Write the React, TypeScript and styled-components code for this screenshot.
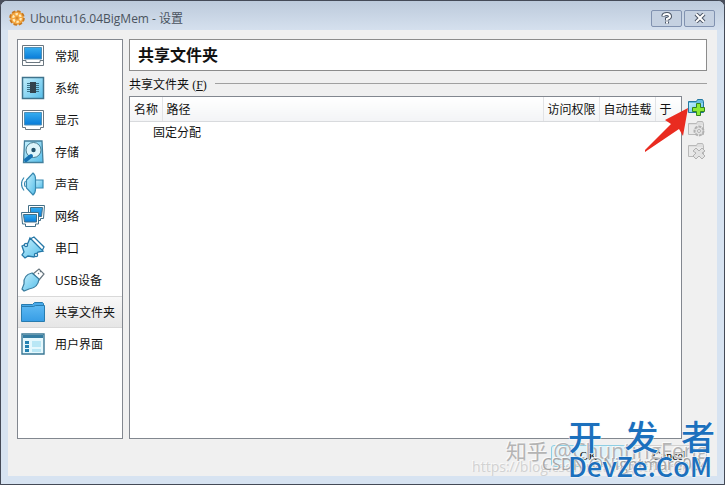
import React from "react";
import styled, { createGlobalStyle } from "styled-components";

const sans = `"Open Sans", "Noto Sans CJK SC", sans-serif`;

const GlobalStyle = createGlobalStyle`
  * { box-sizing: border-box; }
  body { margin: 0; background: #4a4f5c; font: 12px/18px ${sans}; color: #111; }
  button { font: inherit; color: inherit; padding: 0; }
`;

const Window = styled.div`
  height: 100vh;
  display: flex;
  flex-direction: column;
  position: relative;
  overflow: hidden;
  border: 1px solid #444a57;
  border-radius: 7px 7px 0 0;
  background: #d7e3f1;
  padding: 0 7px 8px;
`;

const TitleBar = styled.header`
  height: 29px;
  flex: none;
  display: flex;
  align-items: center;
  gap: 5px;
  margin: 0 -7px;
  padding: 5px 9px 0 8px;
  background: linear-gradient(#bccadb, #d5e0ee);
`;

const Title = styled.h1`
  margin: 0;
  padding-top: 2px;
  flex: 1;
  font-size: 12px;
  line-height: 18px;
  font-weight: 400;
  color: #4a535e;
`;

const CaptionButton = styled.button`
  width: 31px;
  height: 17px;
  display: grid;
  place-items: center;
  border: 1px solid #8192b0;
  border-radius: 2px;
  background: #c5d1e1;
`;

const CaptionButtons = styled.div`
  display: flex;
  gap: 2px;
`;

const Body = styled.main`
  flex: 1;
  min-height: 0;
  display: grid;
  grid-template: minmax(0, 1fr) / 106px minmax(0, 1fr);
  gap: 6px;
  padding: 9px 10px 37px 9px;
  background: #f0f0f0;
`;

const Nav = styled.nav`
  border: 1px solid #82878f;
  background: #fff;
`;

const NavItem = styled.button<{ $active?: boolean }>`
  width: 100%;
  height: 32px;
  display: flex;
  align-items: center;
  gap: 10px;
  padding: 0 3px;
  border: solid ${(p) => (p.$active ? "#d9d9d9" : "transparent")};
  border-width: 1px 0;
  background: ${(p) => (p.$active ? "linear-gradient(#f8f8f8, #e6e6e6)" : "none")};
  text-align: left;
  white-space: nowrap;
  svg { flex: none; }
`;

const NavLabel = styled.span`
  padding-top: 2px;
`;

const Panel = styled.section`
  display: flex;
  flex-direction: column;
  min-width: 0;
`;

const Heading = styled.h2`
  margin: 0;
  height: 32px;
  padding: 0 8px;
  border: 1px solid #8c8c8c;
  background: #fff;
  font-size: 16px;
  line-height: 30px;
  font-weight: 700;
`;

const Group = styled.div`
  display: flex;
  align-items: center;
  gap: 8px;
  height: 25px;
  &::after {
    content: "";
    flex: 1;
    height: 1px;
    background: #a0a0a0;
  }
`;

const GroupLabel = styled.span`
  padding-top: 2px;
`;

const Shortcut = styled.span`
  font-family: "Liberation Serif", serif;
`;

const Content = styled.div`
  flex: 1;
  min-height: 0;
  display: flex;
  gap: 5px;
`;

const TableBox = styled.div`
  flex: 1;
  border: 1px solid #82878f;
  background: #fff;
`;

const Table = styled.table`
  width: 100%;
  table-layout: fixed;
  border-collapse: collapse;
`;

const HeadCell = styled.th<{ $width?: number }>`
  width: ${(p) => (p.$width ? `${p.$width}px` : "auto")};
  height: 24px;
  padding: 2px 0 0 4px;
  border-right: 1px solid #e2e3e6;
  border-bottom: 1px solid #d8dadd;
  background: linear-gradient(#fff, #f3f4f6);
  font-weight: 400;
  text-align: left;
  white-space: nowrap;
  &:last-child { border-right: 0; }
`;

const Cell = styled.td`
  height: 20px;
  padding: 2px 0 0 23px;
`;

const Tools = styled.div`
  width: 20px;
  padding-top: 2px;
  display: flex;
  flex-direction: column;
  gap: 4px;
`;

const Tool = styled.button`
  width: 20px;
  height: 18px;
  border: 0;
  background: none;
  svg { display: block; }
`;

const Arrow = styled.svg`
  position: absolute;
  right: 35px;
  top: 105px;
`;

const DialogButtons = styled.div`
  position: absolute;
  right: 17px;
  bottom: 17px;
  display: flex;
  gap: 6px;
`;

const DialogButton = styled.button<{ $primary?: boolean }>`
  width: 75px;
  height: 22px;
  border: 1px solid ${(p) => (p.$primary ? "#8fcfe4" : "#d2d2d2")};
  border-radius: 3px;
  background: ${(p) => (p.$primary ? "#dff1f7" : "#eee")};
  font-family: "Liberation Serif", serif;
`;

const Mark = styled.span<{ $size: number; $right: number; $bottom: number; $color: string }>`
  position: absolute;
  right: ${(p) => p.$right}px;
  bottom: ${(p) => p.$bottom}px;
  color: ${(p) => p.$color};
  font-size: ${(p) => p.$size}px;
  line-height: 1;
  white-space: nowrap;
  text-shadow: -1px -1px #fafafa;
`;

const Brand = styled.div`
  position: absolute;
  right: 9px;
  bottom: 6px;
  width: 147px;
  color: #1c70bd;
  font-family: "Noto Sans CJK SC", sans-serif;
  font-weight: 500;
  -webkit-text-stroke: 1px #f6fafd;
  paint-order: stroke fill;
`;

const BrandTop = styled.div`
  display: flex;
  justify-content: space-between;
  font-size: 34px;
  line-height: 36px;
`;

const BrandBottom = styled.div`
  font-size: 27px;
  line-height: 24px;
  white-space: nowrap;
`;

const HiddenDefs = styled.svg`
  position: absolute;
`;

const Gradients = () => (
  <HiddenDefs width="0" height="0" aria-hidden="true">
    <defs>
      <linearGradient id="screen" x2="0" y2="1"><stop stopColor="#35adf0" /><stop offset="1" stopColor="#087bd8" /></linearGradient>
      <linearGradient id="pale" x2="1" y2="1"><stop stopColor="#c5f0fd" /><stop offset="1" stopColor="#55bde9" /></linearGradient>
      <linearGradient id="folder" x2="0" y2="1"><stop stopColor="#5cb8f2" /><stop offset="1" stopColor="#379de5" /></linearGradient>
    </defs>
  </HiddenDefs>
);

const icons: Record<string, React.ReactNode> = {
  general: <g stroke="#6b7780"><path fill="#fff" d="M1.5 1.5h21v20h-21z" /><path fill="url(#screen)" stroke="#4d90b9" d="M3.5 3.5h17v11.5h-17z" /><path fill="none" d="M2 16.5h3v2h14v-2h3" /></g>,
  system: <g><path fill="url(#pale)" stroke="#40738c" strokeWidth="1.5" d="M1.5 1.5h21v21h-21z" /><path stroke="#397188" d="M6 7.5h12M6 9.5h12M6 11.5h12M6 13.5h12M6 15.5h12" /><path fill="#33434d" d="M9 6h6v11H9z" /></g>,
  display: <g stroke="#6b7780"><path fill="#fff" d="M1.5 2.5h21v17h-3v2h-15v-2h-3z" /><path fill="url(#screen)" stroke="#4d90b9" d="M3.5 4.5h17v12.5h-17z" /></g>,
  storage: <g><path fill="url(#pale)" stroke="#427f9c" strokeWidth="1.3" d="M3.5 1h17.5l1 21.5H2.5z" /><circle cx="12.5" cy="10" r="7.5" fill="#def5fb" stroke="#487b90" /><circle cx="12.5" cy="10" r="2.2" fill="#24526b" /><path stroke="#1672b3" strokeWidth="4" strokeLinecap="round" d="m5 20 5-4" /></g>,
  audio: <g fill="url(#pale)" stroke="#3a8ab1" strokeWidth="1.2"><path d="M14 8h8v8h-8z" /><path d="M5.5 8 12 1q2.5 2 2.5 6v10q0 4-2.5 6l-6.5-7z" /><path fill="none" d="M3 5.5q-5 6.500 0 13M4.5 9q-2 3 0 6" /></g>,
  network: <g stroke="#426f87"><path fill="#fff" d="M7.5 1.5h16l-1 13h-3v2h-9v-2h-3z" /><path fill="url(#screen)" d="M9.5 3.5h12l-1 9h-11z" /><path fill="#fff" d="M.5 8.5h17v11.5h-3v2.5h-10v-2.5h-3z" /><path fill="url(#screen)" d="M2.5 10.5h13v7.5h-12z" /></g>,
  serial: <g stroke="#2678a7" strokeWidth="1.3"><path fill="#fff" d="m9 3 4-2 10 10-2 4z" /><path fill="url(#pale)" d="m9 2 13 13-5 1-4 5-6-1-3 2-3-3 2-3-2-6 6-3z" /><circle cx="5" cy="9" r="1.6" fill="#fff" /><circle cx="15" cy="19" r="1.6" fill="#fff" /></g>,
  usb: <g stroke="#397b9d" strokeWidth="1.2"><path fill="#fff" stroke="#687780" d="m12 6 6-5 5 5-5 6z" /><path stroke="#687780" d="m17 5 1 1m1-3 1 1" /><path fill="url(#pale)" d="M11 5q-9 2-8 11l-2 5 2 2 5-2q9-1 10-10z" /></g>,
  shared: <g stroke="#287caf"><path fill="#48a9e9" d="M.5 20V4.5h11l2-2h8l1 1v4z" /><path fill="url(#folder)" d="M.5 6.5h12l2-1h9v16H.5z" /></g>,
  ui: <g><path fill="#e5f8fd" stroke="#3a7794" strokeWidth="1.4" d="M1 2h22v20H1z" /><path fill="#347da2" d="M2 3h20v3H2z" /><path fill="#2382b2" d="M4 9h4v3H4zm0 4h4v3H4zm0 4h4v3H4z" /><path fill="#b9e7f5" d="M11 9h9v6h-9zm0 8h9v3h-9z" /></g>,
};

const items: [string, string][] = [
  ["general", "常规"], ["system", "系统"], ["display", "显示"], ["storage", "存储"], ["audio", "声音"],
  ["network", "网络"], ["serial", "串口"], ["usb", "USB设备"], ["shared", "共享文件夹"], ["ui", "用户界面"],
];

const FolderTool = ({ kind }: { kind: "add" | "edit" | "remove" }) => {
  const on = kind === "add";
  return (
    <svg width="20" height="18" viewBox="0 0 20 18" aria-hidden="true">
      <path fill={on ? "#68bce0" : "#dedede"} stroke={on ? "#2478a0" : "#b9b9b9"} d="M1.5 14.5v-11h8l1-2h5l1 2v11z" />
      <path fill={on ? "url(#pale)" : "#e9e9e9"} d="M2 5h14v9H2z" />
      {on && <path fill="#8bea35" stroke="#32851b" d="M9.5 5.5h4v4h4v4h-4v4h-4v-4h-4v-4h4z" />}
      {kind === "edit" && <g stroke="#b1b1b1" fill="#e2e2e2"><circle cx="12" cy="11" r="4.5" strokeDasharray="3 1" strokeWidth="2" /><circle cx="12" cy="11" r="1.5" fill="#f5f5f5" /></g>}
      {kind === "remove" && <path fill="#e2e2e2" stroke="#b1b1b1" d="m9 6 3 3 3-3 3 3-3 2 3 3-3 3-3-3-3 3-3-3 3-3-3-2z" />}
    </svg>
  );
};

export default function App() {
  return (
    <Window>
      <GlobalStyle />
      <Gradients />
      <TitleBar>
        <svg width="16" height="16" viewBox="0 0 16 16" aria-hidden="true">
          <circle cx="8" cy="8" r="6.8" fill="#ef9a32" stroke="#c57a23" strokeWidth="2" strokeDasharray="3.4 1.94" />
          <circle cx="8" cy="8" r="6" fill="#f4a640" />
          <circle cx="8" cy="8" r="3.8" fill="none" stroke="#ffebb8" strokeWidth="2.2" strokeDasharray="2.4 1.58" />
          <circle cx="8" cy="8" r="1.5" fill="#d98b2c" />
        </svg>
        <Title>Ubuntu16.04BigMem - 设置</Title>
        <CaptionButtons>
          <CaptionButton aria-label="Help">
            <svg width="12" height="13" viewBox="0 0 12 13"><g fill="none"><path stroke="#4c5666" strokeWidth="4" d="M2.5 4.5V3.5Q3 2 6 2t3 2.5Q9 6 6 7v1.5M6 9.5v2" /><path stroke="#fff" strokeWidth="2" d="M2.5 4V3.5Q3 2 6 2t3 2.5Q9 6 6 7v1.5M6 9.5v2" /></g></svg>
          </CaptionButton>
          <CaptionButton aria-label="Close">
            <svg width="12" height="10" viewBox="0 0 12 10"><path stroke="#4c5666" strokeWidth="4" d="m2 1 8 8m0-8-8 8" /><path stroke="#fff" strokeWidth="2" d="m2 1 8 8m0-8-8 8" /></svg>
          </CaptionButton>
        </CaptionButtons>
      </TitleBar>
      <Body>
        <Nav>
          {items.map(([id, label]) => (
            <NavItem key={id} $active={id === "shared"}>
              <svg width="24" height="24" viewBox="0 0 24 24" fill="none" aria-hidden="true">{icons[id]}</svg>
              <NavLabel>{label}</NavLabel>
            </NavItem>
          ))}
        </Nav>
        <Panel>
          <Heading>共享文件夹</Heading>
          <Group><GroupLabel>共享文件夹 <Shortcut>(<u>F</u>)</Shortcut></GroupLabel></Group>
          <Content>
            <TableBox>
              <Table>
                <thead><tr>
                  <HeadCell $width={32}>名称</HeadCell><HeadCell>路径</HeadCell><HeadCell $width={56}>访问权限</HeadCell>
                  <HeadCell $width={56}>自动挂载</HeadCell><HeadCell $width={26}>于</HeadCell>
                </tr></thead>
                <tbody><tr><Cell colSpan={5}>固定分配</Cell></tr></tbody>
              </Table>
            </TableBox>
            <Tools>
              <Tool aria-label="Add shared folder"><FolderTool kind="add" /></Tool>
              <Tool aria-label="Edit shared folder" disabled><FolderTool kind="edit" /></Tool>
              <Tool aria-label="Remove shared folder" disabled><FolderTool kind="remove" /></Tool>
            </Tools>
          </Content>
        </Panel>
      </Body>
      <DialogButtons>
        <DialogButton $primary>OK</DialogButton>
        <DialogButton>Cancel</DialogButton>
      </DialogButtons>
      <Mark $size={21} $right={16} $bottom={22} $color="#b4b4b4">知乎 @ChuntingFeng</Mark>
      <Mark $size={14} $right={18} $bottom={10} $color="#d2d2d2">https://blog.csdn.net/Nightmare004</Mark>
      <Mark $size={16} $right={14} $bottom={12} $color="#a4a4a4">CSDN @Nightmare004</Mark>
      <Brand><BrandTop><span>开</span><span>发</span><span>者</span></BrandTop><BrandBottom>DevZe.CoM</BrandBottom></Brand>
      <Arrow width="45" height="46" viewBox="0 0 45 46" aria-hidden="true"><path fill="#e92b20" d="M44 2 21 14l6 4L1 44v2l34-23 4 7z" /></Arrow>
    </Window>
  );
}
